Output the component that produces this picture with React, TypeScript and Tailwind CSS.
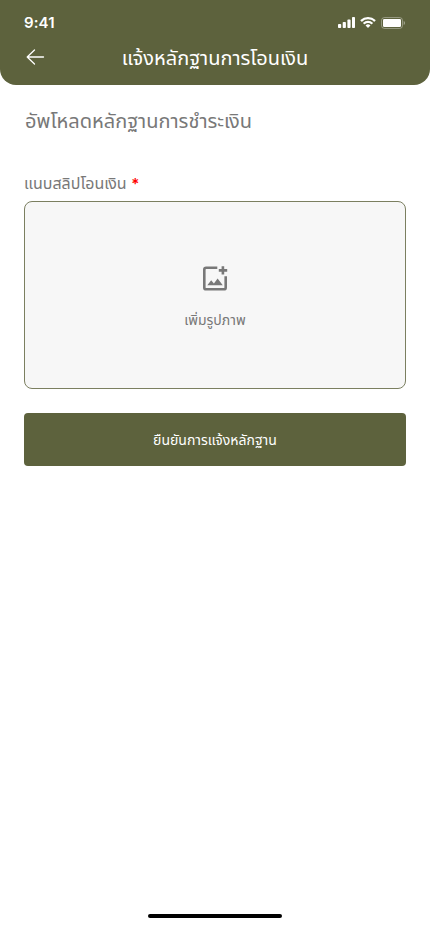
function StatusBar() {
  return (
    <div className="flex h-[44px] items-center justify-between pl-6 pr-[25px] pt-[1px]">
      <span className="text-[15px] font-semibold leading-5 tracking-[0.1px]">9:41</span>
      <div className="flex items-center gap-[5px]">
        <svg width="17" height="11" viewBox="0 0 17 11" fill="currentColor">
          <rect x="0" y="7" width="3.2" height="4" rx="0.8" />
          <rect x="4.7" y="5" width="3.2" height="6" rx="0.8" />
          <rect x="9.4" y="2.6" width="3.2" height="8.4" rx="0.8" />
          <rect x="14" y="0" width="3" height="11" rx="0.8" />
        </svg>
        <svg width="16" height="11" viewBox="0 0 16 11" fill="currentColor">
          <path d="M8 2.28c2.22 0 4.36.85 5.97 2.38.12.12.31.11.43 0l1.16-1.17a.31.31 0 0 0 0-.45 10.96 10.96 0 0 0-15.12 0 .31.31 0 0 0 0 .45l1.16 1.17c.12.11.31.12.43 0A8.67 8.67 0 0 1 8 2.28Zm0 3.8c1.22 0 2.4.45 3.3 1.27.12.12.32.12.44 0l1.15-1.17a.32.32 0 0 0 0-.46 7.14 7.14 0 0 0-9.77 0 .32.32 0 0 0 0 .46l1.15 1.17c.12.12.32.12.44 0A4.89 4.89 0 0 1 8 6.08Zm2.25 2.56a.32.32 0 0 0 0-.47 3.49 3.49 0 0 0-4.5 0 .32.32 0 0 0 0 .47l2.02 2.03c.12.12.33.12.45 0l2.03-2.03Z" />
        </svg>
        <svg width="24" height="12" viewBox="0 0 24 12" fill="none">
          <rect x="0.5" y="0.5" width="21" height="11" rx="3" stroke="currentColor" strokeOpacity="0.35" />
          <path d="M22.7 4v4c.8-.34 1.3-1.13 1.3-2s-.5-1.66-1.3-2Z" fill="currentColor" fillOpacity="0.4" />
          <rect x="2" y="2" width="18" height="8" rx="1.2" fill="currentColor" />
        </svg>
      </div>
    </div>
  );
}

function Header() {
  return (
    <header className="h-[85px] rounded-b-2xl bg-[#5d623d] text-white">
      <StatusBar />
      <div className="grid h-[28px] grid-cols-[60px_1fr_60px] items-center">
        <button aria-label="ย้อนกลับ" className="pb-[2px] pl-[26px]">
          <svg className="block" width="19" height="18" viewBox="0 0 19 18" fill="none" stroke="currentColor" strokeWidth="1.3" strokeLinecap="round" strokeLinejoin="round">
            <path d="M8.5 2 1.2 9l7.3 7M1.2 9h16.3" />
          </svg>
        </button>
        <h1 className="text-center text-[20px] leading-[28px]">แจ้งหลักฐานการโอนเงิน</h1>
      </div>
    </header>
  );
}

function AddImageIcon() {
  return (
    <svg width="26" height="26" viewBox="0 0 26 26" fill="none">
      <path d="M15.3 2.7H4.2c-1.1 0-1.9.8-1.9 1.9v17.8c0 1.1.8 1.9 1.9 1.9h17.6c1.1 0 1.9-.8 1.9-1.9V11.3" stroke="currentColor" strokeWidth="2.6" />
      <path d="M20.9 1.2v8.4M16.8 5.4h8.4" stroke="currentColor" strokeWidth="2.6" />
      <path d="m5.3 20.3 3.9-5.1 2.7 3.4 3.7-5 5.2 6.7H5.3Z" fill="currentColor" />
    </svg>
  );
}

export default function App() {
  return (
    <div className="flex h-[932px] w-[430px] flex-col bg-white font-['Inter','Noto_Sans_Thai','Noto_Sans',sans-serif] text-[#787878]">
      <Header />
      <main className="flex flex-1 flex-col px-6">
        <h2 className="mt-[21px] pl-[1px] text-[20px] leading-[30px]">อัพโหลดหลักฐานการชำระเงิน</h2>
        <div className="mt-[35px] text-[16px] leading-[24px]">
          แนบสลิปโอนเงิน <span className="font-['Inter',sans-serif] text-[15px] leading-none font-semibold text-[#ff0000]">*</span>
        </div>
        <button className="mt-[6px] flex h-[188px] flex-col items-center rounded-lg border border-[#7b7f60] bg-[#f7f7f7] pt-[63px]">
          <AddImageIcon />
          <span className="mt-[19px] text-[14px] leading-5">เพิ่มรูปภาพ</span>
        </button>
        <button className="mt-6 h-[53px] rounded bg-[#5d623d] text-[14px] text-white">ยืนยันการแจ้งหลักฐาน</button>
      </main>
      <div className="mb-[14px] h-1 w-[134px] self-center rounded-full bg-black" />
    </div>
  );
}
